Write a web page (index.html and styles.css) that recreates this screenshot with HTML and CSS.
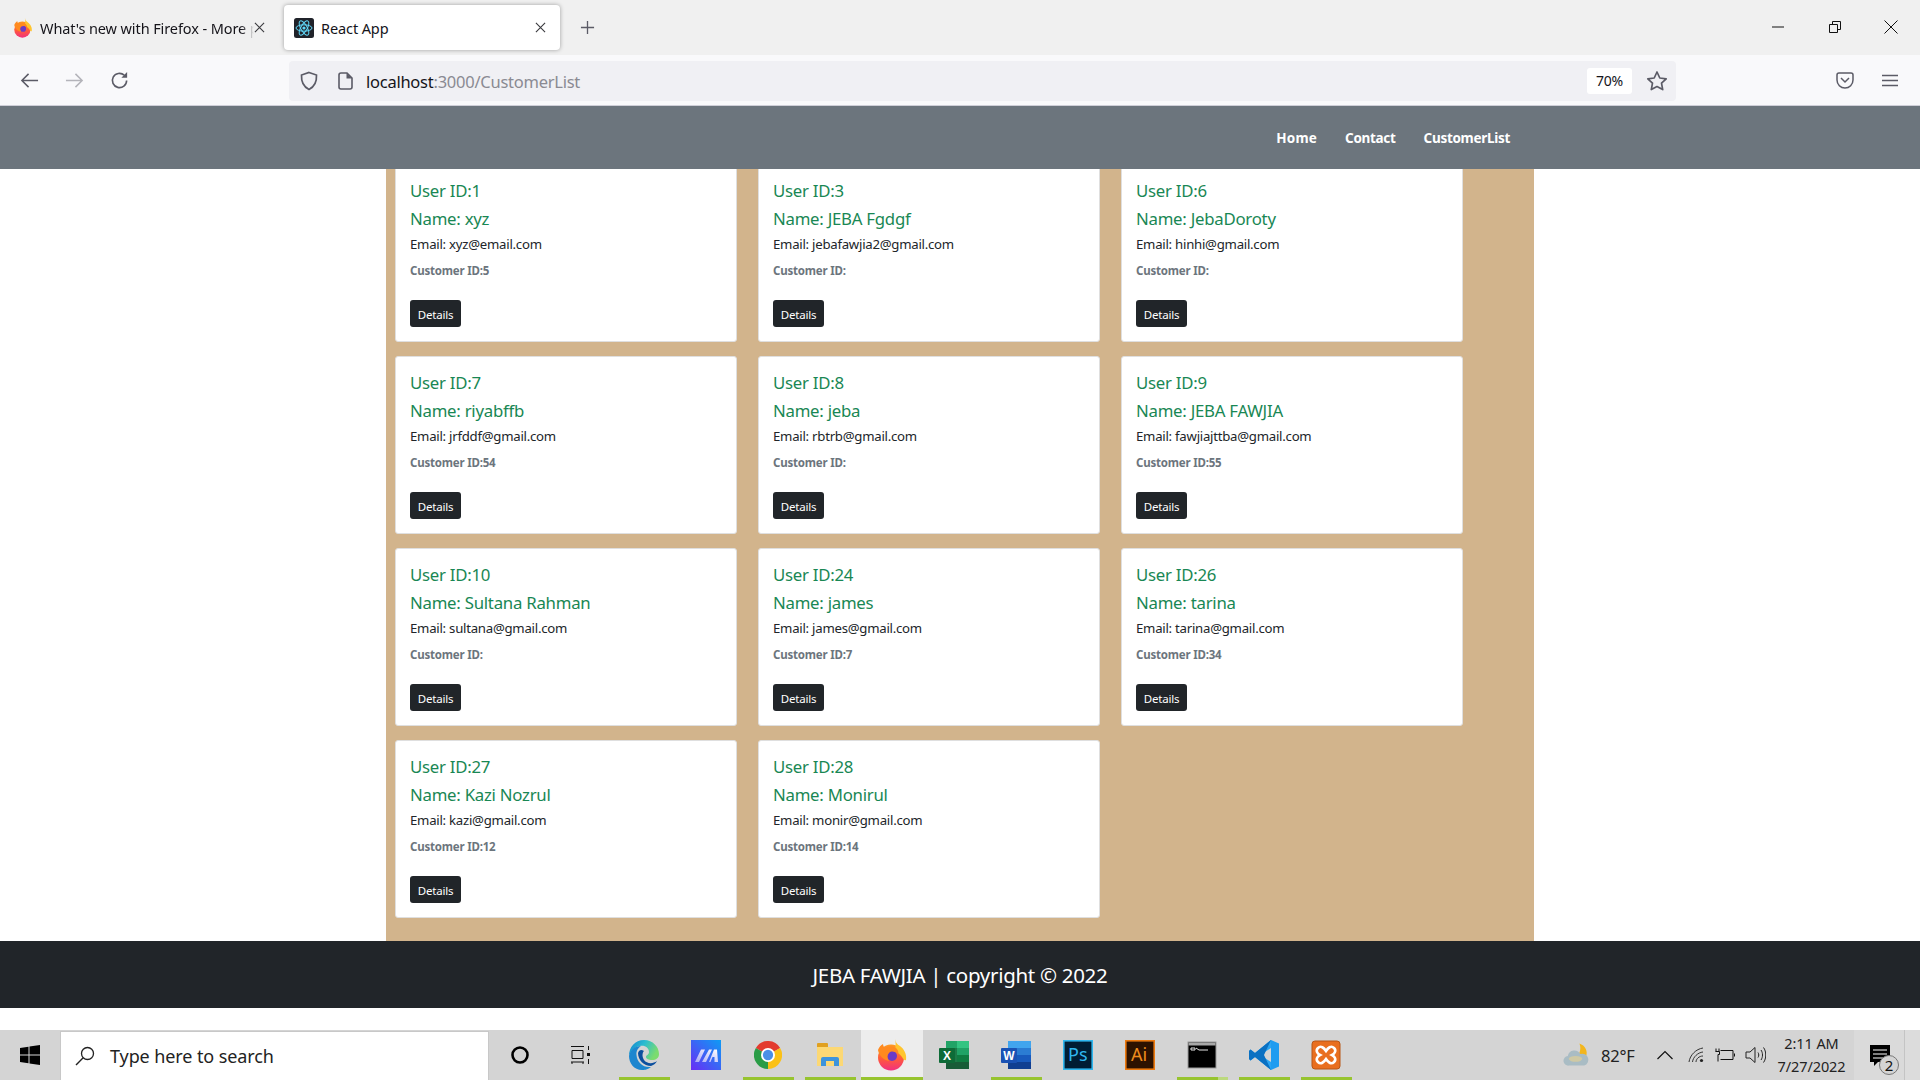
FILE: index.html
```html
<!DOCTYPE html>
<html lang="en">
<head>
<meta charset="utf-8">
<title>React App</title>
<link rel="stylesheet" href="styles.css">
</head>
<body>
<svg class="defs" aria-hidden="true">
  <defs>
    <linearGradient id="ffbody" x1="0" y1="0" x2="0" y2="1"><stop offset="0" stop-color="#ff9a1f"/><stop offset=".55" stop-color="#ff5a3c"/><stop offset="1" stop-color="#f1307f"/></linearGradient>
    <linearGradient id="edgeg" x1="0" y1="0" x2="1" y2=".4"><stop offset="0" stop-color="#0f7fcf"/><stop offset=".5" stop-color="#2bbcd0"/><stop offset="1" stop-color="#7bdc6e"/></linearGradient>
    <linearGradient id="mg" x1="0" y1="1" x2="1" y2="0"><stop offset="0" stop-color="#6a2cf5"/><stop offset="1" stop-color="#0d9cf5"/></linearGradient>
    <linearGradient id="mw" x1="0" y1="1" x2="1" y2="0"><stop offset="0" stop-color="#a8a6f5"/><stop offset="1" stop-color="#ffffff"/></linearGradient>
    <symbol id="firefox" viewBox="0 0 32 32">
      <circle cx="15" cy="18.500" r="13" fill="url(#ffbody)"/>
      <path d="M19 0c1 4 2 5 5 7 4 3 7 8 6 14-1 1-3-1-4-3-2-3-5-5-8-6 2-3 2-8 1-12z" fill="#ffc52e"/>
      <circle cx="16" cy="17" r="5" fill="#6a3bc6"/>
      <path d="M2 11c1-3 3-5 5-6 0 2 1 3 2 4 3-2 8-2 11 0 2 2 3 4 2 6-3-3-7-3-9-1-2 2-2 5 0 8-5-1-10-5-11-11z" fill="#ff8a1f"/>
    </symbol>
  </defs>
</svg>
<div class="screen">
  <header class="tabstrip">
    <div class="tab">
      <svg class="ic20"><use href="#firefox"/></svg>
      <span class="tab-title fade">What's new with Firefox - More p</span>
      <svg class="ic-close" viewBox="0 0 12 12"><path d="M1 1l10 10M11 1L1 11" stroke="#3a3a3e" stroke-width="1.200" fill="none"/></svg>
    </div>
    <div class="tab tab-active">
      <svg class="ic20" viewBox="0 0 20 20"><rect width="20" height="20" rx="2.500" fill="#20232a"/><g fill="none" stroke="#61dafb" stroke-width="1"><ellipse cx="10" cy="10" rx="8" ry="3.200"/><ellipse cx="10" cy="10" rx="8" ry="3.200" transform="rotate(60 10 10)"/><ellipse cx="10" cy="10" rx="8" ry="3.200" transform="rotate(120 10 10)"/></g><circle cx="10" cy="10" r="1.600" fill="#61dafb"/></svg>
      <span class="tab-title">React App</span>
      <svg class="ic-close" viewBox="0 0 12 12"><path d="M1 1l10 10M11 1L1 11" stroke="#3a3a3e" stroke-width="1.200" fill="none"/></svg>
    </div>
    <svg class="newtab" viewBox="0 0 16 16"><path d="M8 1v14M1 8h14" stroke="#5b5b66" stroke-width="1.400" fill="none"/></svg>
    <div class="winctl">
      <svg viewBox="0 0 14 14"><path d="M1 7h12" stroke="#111" fill="none"/></svg>
      <svg viewBox="0 0 14 14"><path d="M1.500 4.500h8v8h-8zM4.500 4.500v-3h8v8h-3" stroke="#111" fill="none"/></svg>
      <svg viewBox="0 0 14 14"><path d="M.5.5l13 13M13.500.5l-13 13" stroke="#111" fill="none"/></svg>
    </div>
  </header>
  <div class="toolbar">
    <div class="navbtns">
      <svg viewBox="0 0 20 20"><path d="M19 10H2M9 3l-7 7 7 7" stroke="#5b5b66" stroke-width="1.600" fill="none"/></svg>
      <svg viewBox="0 0 20 20"><path d="M1 10h17M11 3l7 7-7 7" stroke="#b4b4ba" stroke-width="1.600" fill="none"/></svg>
      <svg viewBox="0 0 20 20"><path d="M17.500 10a7.500 7.500 0 1 1-2.500-5.600" stroke="#5b5b66" stroke-width="1.700" fill="none"/><path d="M18 1v6h-6z" fill="#5b5b66"/></svg>
    </div>
    <div class="urlbar">
      <svg class="shield" viewBox="0 0 20 20"><path d="M10 1.500l7.500 2.500c.3 6-1.500 11.500-7.500 14.500C4 15.500 2.200 10 2.500 4z" stroke="#5b5b66" stroke-width="1.700" fill="none"/></svg>
      <svg class="pageic" viewBox="0 0 18 18"><path d="M3 3a2 2 0 0 1 2-2h6l5 5v9a2 2 0 0 1-2 2H5a2 2 0 0 1-2-2z" stroke="#5b5b66" stroke-width="1.600" fill="none"/><path d="M10.500 1v5.500H16z" fill="#5b5b66"/></svg>
      <span class="url"><span class="url-host">localhost</span>:3000/CustomerList</span>
      <span class="zoom-badge">70%</span>
      <svg class="star" viewBox="0 0 22 22"><path d="M11 2l2.800 6 6.400.8-4.700 4.400 1.200 6.400L11 16.500l-5.700 3.100 1.200-6.400L1.800 8.800 8.200 8z" stroke="#5b5b66" stroke-width="1.700" stroke-linejoin="round" fill="none"/></svg>
    </div>
    <svg class="pocket" viewBox="0 0 18 17"><path d="M1 3a2 2 0 0 1 2-2h12a2 2 0 0 1 2 2v5a8 8 0 0 1-16 0z" stroke="#5b5b66" stroke-width="1.500" fill="none"/><path d="M5 6l4 4 4-4" stroke="#5b5b66" stroke-width="1.500" fill="none"/></svg>
    <svg class="burger" viewBox="0 0 16 13"><path d="M0 1.500h16M0 6.500h16M0 11.500h16" stroke="#5b5b66" stroke-width="1.400" fill="none"/></svg>
  </div>

  <nav class="sitenav">
    <a class="navlink">Home</a>
    <a class="navlink">Contact</a>
    <a class="navlink">CustomerList</a>
  </nav>

  <main class="content">
    <div class="cards">
      <article class="card"><h5 class="card-title">User ID:1</h5><h5 class="card-title">Name: xyz</h5><p class="card-email">Email: xyz@email.com</p><p class="card-cust">Customer ID:5</p><button class="btn">Details</button></article>
      <article class="card"><h5 class="card-title">User ID:3</h5><h5 class="card-title">Name: JEBA Fgdgf</h5><p class="card-email">Email: jebafawjia2@gmail.com</p><p class="card-cust">Customer ID:</p><button class="btn">Details</button></article>
      <article class="card"><h5 class="card-title">User ID:6</h5><h5 class="card-title">Name: JebaDoroty</h5><p class="card-email">Email: hinhi@gmail.com</p><p class="card-cust">Customer ID:</p><button class="btn">Details</button></article>
      <article class="card"><h5 class="card-title">User ID:7</h5><h5 class="card-title">Name: riyabffb</h5><p class="card-email">Email: jrfddf@gmail.com</p><p class="card-cust">Customer ID:54</p><button class="btn">Details</button></article>
      <article class="card"><h5 class="card-title">User ID:8</h5><h5 class="card-title">Name: jeba</h5><p class="card-email">Email: rbtrb@gmail.com</p><p class="card-cust">Customer ID:</p><button class="btn">Details</button></article>
      <article class="card"><h5 class="card-title">User ID:9</h5><h5 class="card-title">Name: JEBA FAWJIA</h5><p class="card-email">Email: fawjiajttba@gmail.com</p><p class="card-cust">Customer ID:55</p><button class="btn">Details</button></article>
      <article class="card"><h5 class="card-title">User ID:10</h5><h5 class="card-title">Name: Sultana Rahman</h5><p class="card-email">Email: sultana@gmail.com</p><p class="card-cust">Customer ID:</p><button class="btn">Details</button></article>
      <article class="card"><h5 class="card-title">User ID:24</h5><h5 class="card-title">Name: james</h5><p class="card-email">Email: james@gmail.com</p><p class="card-cust">Customer ID:7</p><button class="btn">Details</button></article>
      <article class="card"><h5 class="card-title">User ID:26</h5><h5 class="card-title">Name: tarina</h5><p class="card-email">Email: tarina@gmail.com</p><p class="card-cust">Customer ID:34</p><button class="btn">Details</button></article>
      <article class="card"><h5 class="card-title">User ID:27</h5><h5 class="card-title">Name: Kazi Nozrul</h5><p class="card-email">Email: kazi@gmail.com</p><p class="card-cust">Customer ID:12</p><button class="btn">Details</button></article>
      <article class="card"><h5 class="card-title">User ID:28</h5><h5 class="card-title">Name: Monirul</h5><p class="card-email">Email: monir@gmail.com</p><p class="card-cust">Customer ID:14</p><button class="btn">Details</button></article>
    </div>
  </main>

  <footer class="sitefoot">JEBA FAWJIA | copyright © 2022</footer>
  <div class="pagegap"></div>

  <div class="taskbar">
    <div class="startbtn">
      <svg viewBox="0 0 20 20"><path d="M0 3l8.500-1.300V9.500H0zM9.500 1.500L20 0v9.500H9.500zM0 10.500h8.500v7.800L0 17zM9.500 10.500H20V20L9.500 18.500z" fill="#000"/></svg>
    </div>
    <div class="searchbox">
      <svg viewBox="0 0 20 20"><circle cx="12.500" cy="7.500" r="6" stroke="#222" stroke-width="1.300" fill="none"/><path d="M8.200 11.800L1 19" stroke="#222" stroke-width="1.400" fill="none"/></svg>
      <span>Type here to search</span>
    </div>
    <div class="tile"><svg class="ic20" viewBox="0 0 20 20"><circle cx="10" cy="10" r="7.500" stroke="#000" stroke-width="2.600" fill="none"/></svg></div>
    <div class="tile"><svg class="ic20 taskview" viewBox="0 0 20 20"><path d="M1 1.500h13M2 5.500h11v8H2zM1 17h13M2 17v2M13 17v2M18.500 1v4M18.500 14v5" stroke="#111" fill="none"/><rect x="17" y="8" width="3" height="3" fill="#111"/></svg></div>
    <div class="tile tile-on"><svg class="ic30" viewBox="0 0 30 30"><path d="M15 0C24 0 30 7 30 14c0 4-3 6-7 6-3 0-6-1-6-3s3-2 3-5c0-4-4-7-9-6C5 7 1 12 0 16 0 7 6 0 15 0z" fill="url(#edgeg)"/><path d="M0 16C1 10 6 6 12 6 9 8 7 11 7.500 15 8 22 14 28 22 27c-4 3-7 3-9 3C5 30 0 23 0 16z" fill="#1d86cf"/><path d="M9 13c0 7 6 13 13 13 3-1 5-3 6-5-4 3-10 3-13-1-2-3-2-7 0-9-3-2-5-1-6 2z" fill="#0c4f9e"/></svg></div>
    <div class="tile"><svg class="ic30" viewBox="0 0 30 30"><rect width="30" height="30" fill="url(#mg)"/><path d="M4 22l6-12.500h4L8 22zM11 22l7-12.500h3L15 22zM18 22l5-12.500h3l1 12.500h-3.500v-5h-2L19.500 22z" fill="url(#mw)"/></svg></div>
    <div class="tile tile-on"><svg class="ic28" viewBox="0 0 30 30"><path d="M15 15L2 7.500A15 15 0 0 1 28 7.500z" fill="#e33b2e"/><path d="M15 15L2 7.500A15 15 0 0 0 15 30z" fill="#2a9c46"/><path d="M15 15L28 7.500A15 15 0 0 1 15 30z" fill="#fbc116"/><circle cx="15" cy="15" r="7.500" fill="#fff"/><circle cx="15" cy="15" r="5.500" fill="#4a8fe8"/></svg></div>
    <div class="tile tile-on"><svg class="ic30" viewBox="0 0 30 30"><rect x="2" y="3" width="11" height="6" rx="1" fill="#e0a020"/><rect x="2" y="7" width="26" height="19" fill="#fcd874"/><path d="M6 26v-7a2 2 0 0 1 2-2h14a2 2 0 0 1 2 2v7h-5v-5h-8v5z" fill="#3d94dc"/></svg></div>
    <div class="tile tile-on tile-active"><svg class="ic32" viewBox="0 0 32 32"><use href="#firefox"/></svg></div>
    <div class="tile"><svg class="ic30" viewBox="0 0 30 30"><rect x="7" y="1" width="23" height="28" rx="1.500" fill="#1d7a48"/><rect x="18" y="1" width="12" height="7" fill="#33c481"/><rect x="7" y="1" width="11" height="7" fill="#21a366"/><rect x="18" y="8" width="12" height="7" fill="#21a366"/><rect x="18" y="15" width="12" height="7" fill="#107c41"/><rect x="7" y="22" width="23" height="7" fill="#185c37"/><rect y="8" width="16" height="15" rx="1" fill="#0d6b37"/><text class="glyph-x" x="8" y="20">X</text></svg></div>
    <div class="tile tile-on"><svg class="ic30" viewBox="0 0 30 30"><rect x="7" y="1" width="23" height="28" rx="1.500" fill="#185abd"/><rect x="7" y="1" width="23" height="7" fill="#41a5ee"/><rect x="7" y="8" width="23" height="7" fill="#2b7cd3"/><rect x="7" y="22" width="23" height="7" fill="#103f91"/><rect y="8" width="16" height="15" rx="1" fill="#1a52b4"/><text class="glyph-x" x="8" y="20">W</text></svg></div>
    <div class="tile"><svg class="ic30" viewBox="0 0 30 30"><rect x=".8" y=".8" width="28.400" height="28.400" fill="#001d34" stroke="#2fb6ee" stroke-width="1.600"/><text class="glyph-ps" x="5" y="21">Ps</text></svg></div>
    <div class="tile"><svg class="ic30" viewBox="0 0 30 30"><rect x=".8" y=".8" width="28.400" height="28.400" fill="#2d1200" stroke="#ec7a10" stroke-width="1.600"/><text class="glyph-ai" x="6" y="21">Ai</text></svg></div>
    <div class="tile tile-on tile-multi"><svg class="ic30" viewBox="0 0 30 30"><rect x="1" y="2" width="28" height="26" fill="#000" stroke="#9a9a9a"/><rect x="1.500" y="2.500" width="27" height="3" fill="#a8a8a8"/><path d="M4 8h4v2H4zM9 8l3 2h9" stroke="#e6e6e6" fill="none"/></svg></div>
    <div class="tile tile-on"><svg class="ic30" viewBox="0 0 30 30"><path d="M22 0l8 3.500v23L22 30 6 17l-4.500 3.500L0 19V11l1.500-1.500L6 13z" fill="#1f9cf0"/><path d="M22 0v30L11 20.500V9.500z" fill="#2aa5f2"/><path d="M22 8L11 15l11 7z" fill="#d4d4d4"/><path d="M22 0L6 13 1.500 9.500 0 11v8l1.500 1.500L6 17l16 13-7-15z" fill="#0a70c2"/></svg></div>
    <div class="tile tile-on"><svg class="ic30" viewBox="0 0 30 30"><rect x="1" y="1" width="28" height="28" rx="3" fill="#e96f1f" stroke="#b85616"/><path d="M7 8c3-3 6 0 8 3 2-3 5-6 8-3 3 3 0 6-2 7 2 1 5 4 2 7-3 3-6 0-8-3-2 3-5 6-8 3-3-3 0-6 2-7-2-1-5-4-2-7z" stroke="#fff" stroke-width="2.600" fill="none"/></svg></div>
    <div class="tray">
      <svg class="weather" viewBox="0 0 28 24"><path d="M17 0c6 2 9 8 7 13l-10 1c4-4 5-9 3-14z" fill="#f3b61d"/><path d="M6 23a5 5 0 0 1-1-10 7 7 0 0 1 13-2 6 6 0 0 1 4 12z" fill="#a9bcc4"/><ellipse cx="13" cy="16" rx="7" ry="3" fill="#cfc9a4"/></svg>
      <span class="temp">82°F</span>
      <svg class="chev" viewBox="0 0 16 10"><path d="M.5 9L8 1.500 15.500 9" stroke="#111" stroke-width="1.200" fill="none"/></svg>
      <svg class="wifi" viewBox="0 0 16 16"><path d="M1 15C2 8 8 2 15 1M4.500 15C5 10 10 5.500 15 5M8 15c0-3 3-6 7-6" stroke="#333" fill="none"/><circle cx="13.500" cy="13.500" r="1.600" fill="#222"/></svg>
      <svg class="batt" viewBox="0 0 20 14"><path d="M5.500 2.500H18v9H5.500" stroke="#111" fill="none"/><path d="M19.500 5.500v3" stroke="#111" fill="none"/><path d="M1 .5v3M4 .5v3M.5 3.500h4v3h-1.500v7" stroke="#111" fill="none"/></svg>
      <svg class="speaker" viewBox="0 0 21 18"><path d="M1 6h4l5-4.500v15L5 12H1zM13 6.500c1 1.500 1 3.500 0 5M16 4c2 3 2 7 0 10M18.500 1.500c3 4 3 11 0 15" stroke="#222" fill="none"/></svg>
      <div class="clock"><span>2:11 AM</span><span>7/27/2022</span></div>
      <div class="notif">
        <svg viewBox="0 0 30 36"><path d="M1 1h20v17h-12l-4 4v-4H1z" fill="#000"/><path d="M4 6h14M4 10h14M4 14h14" stroke="#fff" fill="none"/><circle cx="20" cy="21" r="9.500" fill="#d4d4d4" stroke="#777"/><text class="glyph-badge" x="20" y="26.500">2</text></svg>
      </div>
      <div class="showdesk"></div>
    </div>
  </div>
</div>
</body>
</html>
```

FILE: styles.css
```css
* { box-sizing: border-box; }
html, body { margin: 0; height: 100%; }
body { font-family: "Noto Sans", "Open Sans", sans-serif; background: #fff; overflow: hidden; }
.defs { position: absolute; width: 0; height: 0; }
.screen { display: flex; flex-direction: column; height: 1080px; }

/* browser chrome */
.tabstrip { height: 55px; background: #f0f0f0; display: flex; align-items: flex-start; flex: none; }
.tab { width: 284px; height: 45px; margin-top: 5px; padding: 0 19px 0 13px; display: flex; align-items: center; gap: 7px; flex: none; }
.tab-active { width: 276px; background: #fff; border-radius: 4px; box-shadow: 0 0 4px rgba(0,0,0,.35); padding: 0 14px 0 10px; }
.tab-title { font-size: 14.500px; letter-spacing: -.1px; color: #15141a; white-space: nowrap; overflow: hidden; flex: 1; }
.fade { margin-right: -7px; -webkit-mask-image: linear-gradient(to right, #000 94%, transparent); mask-image: linear-gradient(to right, #000 94%, transparent); }
.ic20 { width: 20px; height: 20px; flex: none; }
.ic28 { width: 28px; height: 28px; flex: none; }
.ic30 { width: 30px; height: 30px; flex: none; }
.ic32 { width: 32px; height: 32px; flex: none; }
.ic-close { width: 11px; height: 11px; flex: none; }
.newtab { width: 15px; height: 15px; margin: 20px 0 0 20px; flex: none; }
.winctl { margin-left: auto; display: flex; gap: 42.500px; padding: 20px 22px 0 0; }
.winctl svg { width: 14px; height: 14px; display: block; }

.toolbar { height: 51px; flex: none; background: #f9f9fb; border-bottom: 1px solid #cfcfd8; display: flex; align-items: center; padding-top: 1px; }
.navbtns { width: 289px; display: flex; gap: 26px; padding-left: 20px; flex: none; }
.navbtns svg { width: 19px; height: 19px; }
.urlbar { width: 1387px; height: 40px; background: #f0f0f4; border-radius: 4px; display: flex; align-items: center; padding: 0 8px 0 10px; flex: none; }
.shield { width: 20px; height: 20px; flex: none; }
.pageic { width: 18px; height: 18px; margin-left: 17px; flex: none; }
.url { margin-left: 12px; padding-top: 1px; font-size: 16.500px; letter-spacing: -.25px; color: #8a8a92; flex: 1; white-space: nowrap; }
.url-host { color: #15141a; }
.zoom-badge { width: 45px; height: 26px; background: #fff; border-radius: 3px; font-size: 14px; letter-spacing: -.2px; color: #15141a; display: flex; align-items: center; justify-content: center; flex: none; }
.star { width: 22px; height: 22px; margin-left: 14px; flex: none; }
.pocket { width: 18px; height: 17px; margin-left: 160px; flex: none; }
.burger { width: 16px; height: 13px; margin-left: 28px; flex: none; }

/* site */
.sitenav { height: 63px; flex: none; background: #6c757d; display: flex; justify-content: flex-end; align-items: center; gap: 28px; padding: 0 410px 0 0; }
.navlink { color: #fff; font-weight: 700; font-size: 13.500px; letter-spacing: -.3px; }
.navlink:first-child { letter-spacing: .2px; }

.content { flex: 1; min-height: 0; width: 1148px; margin-left: 386px; background: #d2b48c; padding-left: 9px; overflow: hidden; }
.cards { display: grid; grid-template-columns: repeat(3, 342px); grid-auto-rows: 178px; column-gap: 21px; row-gap: 14px; margin-top: -5px; }
.card { background: #fff; border: 1px solid #dfdfdf; border-radius: 3px; padding: 12px 14px 0; display: flex; flex-direction: column; align-items: flex-start; }
.card-title { margin: 0; font-weight: 400; font-size: 16.800px; line-height: 28px; letter-spacing: -.25px; color: #198754; }
.card-email { margin: 0; font-size: 13.200px; line-height: 22px; letter-spacing: -.25px; color: #212529; }
.card-cust { margin: 5px 0 0; font-size: 11.500px; line-height: 22px; font-weight: 700; letter-spacing: -.2px; color: #6c757d; }
.btn { margin-top: 18px; height: 27px; width: 51px; padding: 2px 0 0; border: 0; border-radius: 3px; background: #212529; color: #fff; font-family: inherit; font-size: 11.500px; letter-spacing: -.2px; }

.sitefoot { height: 67px; flex: none; background: #212529; color: #fff; font-size: 20.500px; letter-spacing: -.3px; display: flex; align-items: center; justify-content: center; }
.pagegap { height: 22px; flex: none; background: #fff; }

/* taskbar */
.taskbar { height: 50px; flex: none; background: #d4d4d4; display: flex; align-items: stretch; }
.startbtn { width: 60px; display: flex; align-items: center; padding-left: 20px; flex: none; }
.startbtn svg { width: 20px; height: 20px; }
.searchbox { width: 429px; flex: none; margin-top: 1px; background: #fff; border: 1px solid #c8c8c8; border-bottom: 0; display: flex; align-items: center; padding: 0 0 1px 14px; gap: 15px; font-size: 18px; letter-spacing: -.1px; color: #222; }
.searchbox svg { width: 20px; height: 20px; flex: none; }
.tile { width: 62px; flex: none; display: flex; align-items: center; justify-content: center; position: relative; }
.taskview { margin-right: 4px; }
.tile-active { background: #ededed; }
.tile-on::after { content: ""; position: absolute; left: 5.500px; right: 5.500px; bottom: 0; height: 3px; background: #97c42f; }
.tile-active::after { left: 0; right: 0; }
.tile-multi::before { content: ""; position: absolute; right: 5.500px; bottom: 0; height: 3px; width: 10px; background: #bcd97e; z-index: 1; }
.glyph-x { font-family: "Liberation Sans", sans-serif; font-size: 12px; font-weight: 700; fill: #fff; text-anchor: middle; }
.glyph-ps { font-family: "Noto Sans", sans-serif; font-size: 18px; fill: #2fb6ee; }
.glyph-ai { font-family: "Noto Sans", sans-serif; font-size: 18px; fill: #ef8b1c; }
.glyph-badge { font-family: "Noto Sans", sans-serif; font-size: 15px; fill: #111; text-anchor: middle; }

.tray { flex: 1; display: flex; align-items: center; padding-left: 206px; }
.weather { width: 27px; height: 24px; flex: none; }
.temp { margin-left: 11px; font-size: 16.500px; letter-spacing: -.2px; color: #222; width: 38px; flex: none; }
.chev { width: 16px; height: 10px; margin-left: 18px; flex: none; }
.wifi { width: 16px; height: 16px; margin-left: 15px; flex: none; }
.batt { width: 20px; height: 14px; margin-left: 11px; flex: none; }
.speaker { width: 21px; height: 18px; margin-left: 10px; flex: none; }
.clock { width: 85px; margin-left: 3px; display: flex; flex-direction: column; align-items: center; font-size: 14.500px; line-height: 23px; letter-spacing: -.1px; color: #222; flex: none; }
.notif { width: 50px; align-self: stretch; background: #dadada; padding: 14px 0 0 15px; flex: none; }
.notif svg { width: 30px; height: 36px; display: block; }
.showdesk { flex: 1; align-self: stretch; background: #dcdcdc; border-left: 1px solid #c4c4c4; }
```
